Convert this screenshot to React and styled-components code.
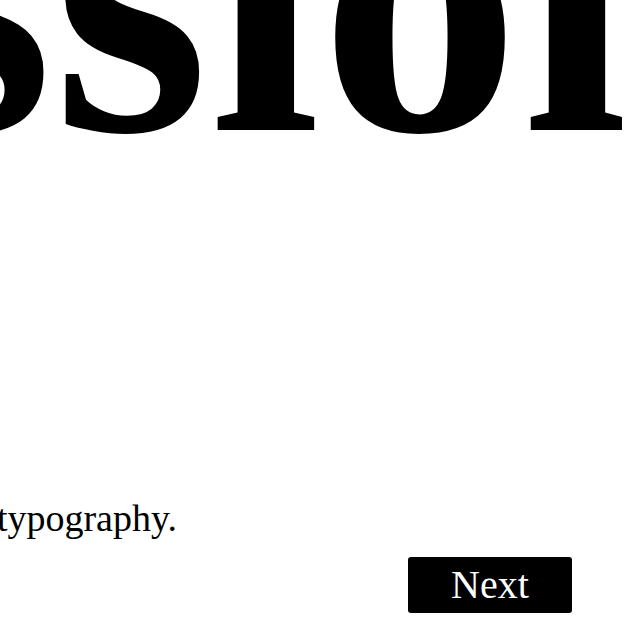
import styled, { createGlobalStyle } from "styled-components";

const GlobalStyle = createGlobalStyle`
  html, body {
    margin: 0;
    padding: 0;
    background: #fff;
    overflow: hidden;
  }

  body {
    font-family: "Liberation Serif", "Times New Roman", serif;
    color: #000;
  }
`;

const Slide = styled.main`
  height: 100vh;
  display: flex;
  flex-direction: column;
  justify-content: flex-end;
  padding-bottom: 27px;
  box-sizing: border-box;
  overflow: hidden;
`;

const Title = styled.h1`
  margin: 0 0 330px;
  display: flex;
  flex-direction: column;
  align-items: center;
  font-size: 400px;
  font-weight: 700;
  line-height: 0.85;
`;

const TitleLine = styled.span`
  white-space: nowrap;
`;

const Footer = styled.footer`
  display: flex;
  flex-direction: column;
  align-items: flex-end;
  gap: 17px;
  padding-right: 68px;
`;

const Caption = styled.p`
  margin: 0 395px 0 0;
  font-size: 38px;
  line-height: 44px;
  white-space: nowrap;
`;

const NextButton = styled.button`
  width: 164px;
  height: 56px;
  padding: 0;
  border: none;
  border-radius: 3px;
  background: #000;
  color: #fff;
  font-family: inherit;
  font-size: 40px;
  line-height: 56px;
  cursor: pointer;
`;

export default function App() {
  return (
    <>
      <GlobalStyle />
      <Slide>
        <Title>
          <TitleLine>Expre</TitleLine>
          <TitleLine>ssion</TitleLine>
        </Title>
        <Footer>
          <Caption>The shape of every word speaks through typography.</Caption>
          <NextButton>Next</NextButton>
        </Footer>
      </Slide>
    </>
  );
}
